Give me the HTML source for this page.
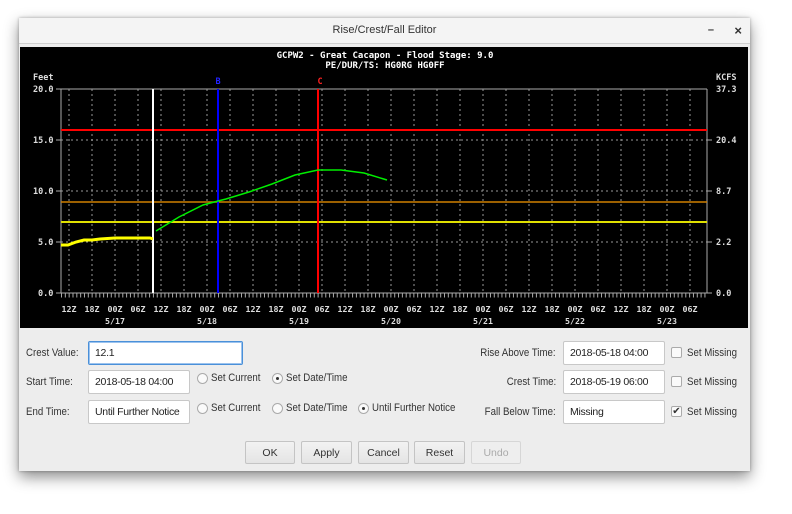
<!DOCTYPE html>
<html><head><meta charset="utf-8"><style>
body{margin:0;width:792px;height:514px;background:#fff;position:relative;overflow:hidden;font-family:"Liberation Sans",sans-serif}
.win{position:absolute;left:19px;top:18px;width:731px;height:453px;background:#ededed;box-shadow:0 6px 14px rgba(0,0,0,.45),0 0 3px rgba(0,0,0,.3)}
.tb{position:absolute;left:0;top:0;width:731px;height:25px;background:#f4f4f4;border-bottom:1px solid #d0d0d0;text-align:center;font-size:11px;line-height:25px;color:#333}
.lbl{position:absolute;font-size:11px;color:#333;transform:scaleX(.88);transform-origin:left;white-space:nowrap}
.rl{transform-origin:right}
.in{position:absolute;background:#fff;border:1px solid #c8c8c8;border-radius:2px;font-size:10.5px;color:#222;line-height:22px;padding-left:6px;box-sizing:border-box;height:24px;white-space:nowrap;overflow:hidden;letter-spacing:-.3px}
.rad{position:absolute;width:11px;height:11px;border:1px solid #aaa;border-radius:50%;background:#fafafa;box-sizing:border-box}
.rad.on::after{content:"";position:absolute;left:3px;top:3px;width:3px;height:3px;border-radius:50%;background:#333}
.cb{position:absolute;width:11px;height:11px;border:1px solid #aaa;border-radius:2px;background:#fafafa;box-sizing:border-box;font-size:10px;line-height:9px;text-align:center;color:#333}
.btn{position:absolute;top:441px;height:23px;border:1px solid #c4c4c4;border-radius:2px;background:linear-gradient(#f2f2f2,#e4e4e4);font-size:10.5px;text-align:center;line-height:22px;color:#333;box-sizing:border-box}
</style></head><body>
<div class="win"><div class="tb">Rise/Crest/Fall Editor<span style="position:absolute;right:36px;top:0;font-weight:bold">–</span><span style="position:absolute;right:8px;top:0;font-size:13px;font-weight:bold">×</span></div></div>
<svg style="position:absolute;left:0;top:0" width="792" height="514" font-family="DejaVu Sans Mono, Liberation Mono, monospace">
<rect x="20" y="47" width="728" height="281" fill="#000"/>
<text x="385" y="58" fill="#fff" font-size="9" font-weight="bold" text-anchor="middle">GCPW2 - Great Cacapon - Flood Stage: 9.0</text>
<text x="385" y="68" fill="#fff" font-size="9" font-weight="bold" text-anchor="middle">PE/DUR/TS: HG0RG   HG0FF</text>
<g fill="#ddd" font-size="8.5" font-weight="bold">
<text x="33" y="80">Feet</text><text x="716" y="80">KCFS</text>
<text x="33" y="92">20.0</text><text x="33" y="143">15.0</text><text x="33" y="194">10.0</text><text x="38" y="245">5.0</text><text x="38" y="296">0.0</text>
<text x="716" y="92">37.3</text><text x="716" y="143">20.4</text><text x="716" y="194">8.7</text><text x="716" y="245">2.2</text><text x="716" y="296">0.0</text>
</g>
<g stroke="#999" stroke-width="1" stroke-dasharray="2,3">
<path d="M61 140H707M61 191H707M61 242H707"/>
<path d="M69 89V293M92 89V293M115 89V293M138 89V293M161 89V293M184 89V293M207 89V293M230 89V293M253 89V293M276 89V293M299 89V293M322 89V293M345 89V293M368 89V293M391 89V293M414 89V293M437 89V293M460 89V293M483 89V293M506 89V293M529 89V293M552 89V293M575 89V293M598 89V293M621 89V293M644 89V293M667 89V293M690 89V293"/>
</g>
<path d="M61 89V293H707V89M56 89H707M56 140H61M56 191H61M56 242H61M56 293H61M707 140H712M707 191H712M707 242H712M707 293H712" stroke="#aaa" fill="none"/>
<path d="M61 295.5H707" stroke="#aaa" stroke-width="4" stroke-dasharray="1,2.83"/>
<g fill="#ddd" font-size="8.3" text-anchor="middle" font-weight="bold">
<text x="69" y="312">12Z</text><text x="92" y="312">18Z</text><text x="115" y="312">00Z</text><text x="138" y="312">06Z</text><text x="161" y="312">12Z</text><text x="184" y="312">18Z</text><text x="207" y="312">00Z</text><text x="230" y="312">06Z</text><text x="253" y="312">12Z</text><text x="276" y="312">18Z</text><text x="299" y="312">00Z</text><text x="322" y="312">06Z</text><text x="345" y="312">12Z</text><text x="368" y="312">18Z</text><text x="391" y="312">00Z</text><text x="414" y="312">06Z</text><text x="437" y="312">12Z</text><text x="460" y="312">18Z</text><text x="483" y="312">00Z</text><text x="506" y="312">06Z</text><text x="529" y="312">12Z</text><text x="552" y="312">18Z</text><text x="575" y="312">00Z</text><text x="598" y="312">06Z</text><text x="621" y="312">12Z</text><text x="644" y="312">18Z</text><text x="667" y="312">00Z</text><text x="690" y="312">06Z</text>
<text x="115" y="324">5/17</text><text x="207" y="324">5/18</text><text x="299" y="324">5/19</text><text x="391" y="324">5/20</text><text x="483" y="324">5/21</text><text x="575" y="324">5/22</text><text x="667" y="324">5/23</text>
</g>
<path d="M61 130H707" stroke="#f00" stroke-width="2"/>
<path d="M61 202H707" stroke="#d08000" stroke-width="1.5"/>
<path d="M61 222H707" stroke="#e0e000" stroke-width="2"/>
<path d="M153 89V293" stroke="#fff" stroke-width="2"/>
<path d="M218 89V293" stroke="#00f" stroke-width="2"/>
<path d="M318 89V293" stroke="#f00" stroke-width="2"/>
<text x="218" y="84" fill="#22f" font-size="8.5" font-weight="bold" text-anchor="middle">B</text>
<text x="320" y="84" fill="#f22" font-size="8.5" font-weight="bold" text-anchor="middle">C</text>
<path d="M61 245L68 245L76 242L84 240L92 240L100 239L115 238L130 238L150 238L153 239" stroke="#ff0" stroke-width="3" fill="none"/>
<path d="M156 231L179 217L203 205L218 201L226 199L249 192L272 184L295 175L318 170L341 170L364 173L387 180" stroke="#0e0" stroke-width="1.5" fill="none"/>
</svg>
<div class="lbl" style="left:26px;top:347px">Crest Value:</div>
<div class="in" style="left:88px;top:341px;width:155px;border:1px solid #4a90d9;box-shadow:0 0 0 1px #9cc3ee inset">12.1</div>
<div class="lbl" style="left:26px;top:376px">Start Time:</div>
<div class="in" style="left:88px;top:370px;width:102px">2018-05-18 04:00</div>
<div class="lbl" style="left:26px;top:406px">End Time:</div>
<div class="in" style="left:88px;top:400px;width:102px">Until Further Notice</div>
<div class="rad" style="left:197px;top:373px"></div><div class="lbl" style="left:211px;top:372px">Set Current</div>
<div class="rad on" style="left:272px;top:373px"></div><div class="lbl" style="left:286px;top:372px">Set Date/Time</div>
<div class="rad" style="left:197px;top:403px"></div><div class="lbl" style="left:211px;top:402px">Set Current</div>
<div class="rad" style="left:272px;top:403px"></div><div class="lbl" style="left:286px;top:402px">Set Date/Time</div>
<div class="rad on" style="left:358px;top:403px"></div><div class="lbl" style="left:372px;top:402px">Until Further Notice</div>
<div class="lbl rl" style="right:236px;top:347px">Rise Above Time:</div>
<div class="lbl rl" style="right:236px;top:376px">Crest Time:</div>
<div class="lbl rl" style="right:236px;top:406px">Fall Below Time:</div>
<div class="in" style="left:563px;top:341px;width:102px">2018-05-18 04:00</div>
<div class="in" style="left:563px;top:370px;width:102px">2018-05-19 06:00</div>
<div class="in" style="left:563px;top:400px;width:102px">Missing</div>
<div class="cb" style="left:671px;top:347px"></div><div class="lbl" style="left:687px;top:347px">Set Missing</div>
<div class="cb" style="left:671px;top:376px"></div><div class="lbl" style="left:687px;top:376px">Set Missing</div>
<div class="cb" style="left:671px;top:406px">✔</div><div class="lbl" style="left:687px;top:406px">Set Missing</div>
<div class="btn" style="left:245px;width:50px">OK</div>
<div class="btn" style="left:301px;width:51px">Apply</div>
<div class="btn" style="left:358px;width:51px">Cancel</div>
<div class="btn" style="left:414px;width:51px">Reset</div>
<div class="btn" style="left:471px;width:50px;color:#aaa;background:#eee;border-color:#d6d6d6">Undo</div>
</body></html>
